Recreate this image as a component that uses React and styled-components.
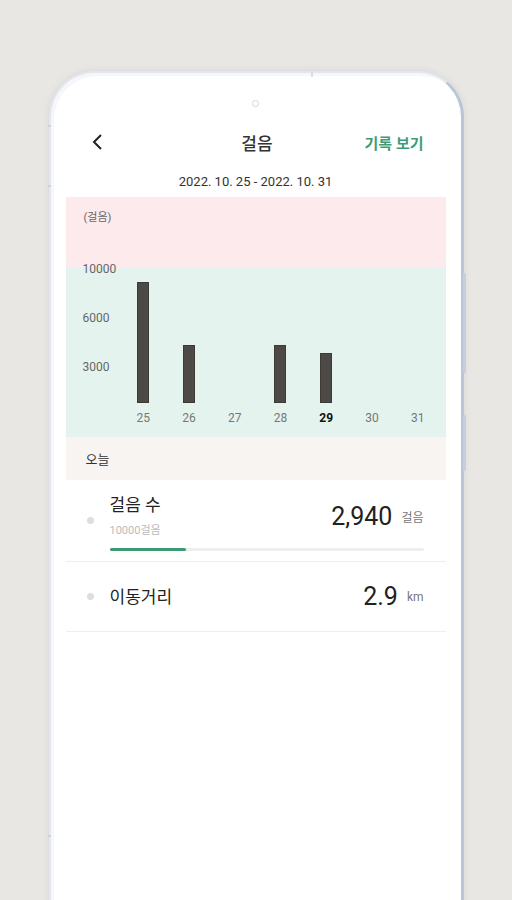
import React from "react";
import styled, { createGlobalStyle } from "styled-components";

const GlobalStyle = createGlobalStyle`
  html, body {
    margin: 0;
    height: 100%;
    overflow: hidden;
    background: #e9e7e3;
  }
  body {
    font-family: Roboto, "Noto Sans CJK KR", sans-serif;
    color: #333;
  }
`;

const Stage = styled.div`
  height: 900px;
  overflow: hidden;
  padding-top: 71px;
  box-sizing: border-box;
  display: flex;
  justify-content: center;
`;

const Phone = styled.div`
  position: relative;
  flex-shrink: 0;
  width: 415px;
  height: 880px;
  background: #fff;
  border: 2px solid #e3e7ee;
  border-right: 3px solid #b9c6d7;
  border-radius: 46px;
  box-shadow: inset 3px 3px 0 #f6f7fa, 0 0 6px rgba(150, 160, 175, 0.25);
  padding: 27px 15px 0 15px;
  box-sizing: border-box;
`;

const SideKey = styled.span`
  position: absolute;
  width: 3px;
  height: ${(p) => p.h}px;
  top: ${(p) => p.top}px;
  ${(p) => (p.left ? "left: -3px;" : "right: -5px;")}
  background: #c6d0dd;
  border-radius: 2px;
`;

const TopNotch = styled.span`
  position: absolute;
  top: -2px;
  left: 260px;
  width: 2px;
  height: 6px;
  background: #d7dde6;
`;

const Camera = styled.div`
  width: 7px;
  height: 7px;
  margin: 0 auto;
  border-radius: 50%;
  border: 1.5px solid #d4d6d8;
  box-sizing: border-box;
`;

const Header = styled.div`
  display: grid;
  grid-template-columns: 1fr auto 1fr;
  align-items: center;
  height: 40px;
  margin-top: 15px;
  padding: 0 22px 0 25px;
`;

const Back = styled.div`
  display: flex;
  align-items: center;
`;

const Title = styled.div`
  font-size: 17px;
  font-weight: 500;
  color: #333;
`;

const Action = styled.div`
  justify-self: end;
  font-size: 15px;
  font-weight: 600;
  color: #3f9b76;
`;

const DateRange = styled.div`
  margin-top: 11px;
  height: 18px;
  line-height: 18px;
  text-align: center;
  font-size: 13px;
  color: #333;
`;

const Chart = styled.div`
  margin-top: 6px;
  height: 240px;
  box-sizing: border-box;
  padding: 13px 5px 12px 18px;
  background: linear-gradient(#fdeaec 0 71px, #e5f3ee 71px 100%);
`;

const Unit = styled.div`
  font-size: 11px;
  line-height: 16px;
  color: #666;
`;

const Plot = styled.div`
  display: flex;
  height: 199px;
`;

const Axis = styled.div`
  width: 37px;
  display: flex;
  flex-direction: column;
  gap: 35px;
  padding-top: 36px;
`;

const Tick = styled.span`
  font-size: 12px;
  line-height: 14px;
  color: #666;
  margin-left: -1px;
`;

const Day = styled.div`
  width: 46px;
  display: flex;
  flex-direction: column;
  align-items: center;
  justify-content: flex-end;
`;

const Bar = styled.div`
  width: 12px;
  background: #4c4947;
  box-shadow: inset 0 0 0 1px #3c3937;
`;

const DayLabel = styled.span`
  margin-top: 8px;
  font-size: 12px;
  line-height: 14px;
  color: ${(p) => (p.today ? "#111" : "#777")};
  font-weight: ${(p) => (p.today ? 700 : 400)};
`;

const SectionHead = styled.div`
  height: 43px;
  display: flex;
  align-items: center;
  padding-left: 20px;
  background: #f7f4f2;
  font-size: 13px;
  color: #333;
`;

const Row = styled.div`
  display: flex;
  align-items: center;
  height: ${(p) => p.h}px;
  padding: 0 22px 0 21px;
  border-bottom: 1px solid #eeeeee;
  box-sizing: border-box;
`;

const Dot = styled.span`
  width: 7px;
  height: 7px;
  border-radius: 50%;
  background: #dedede;
  flex-shrink: 0;
`;

const Main = styled.div`
  flex: 1;
  margin-left: 16px;
  padding-top: ${(p) => p.pad || 0}px;
  display: flex;
  flex-direction: column;
`;

const Line = styled.div`
  display: flex;
  align-items: center;
  justify-content: space-between;
`;

const Label = styled.div`
  font-size: 17px;
  line-height: 20px;
  color: #222;
`;

const Sub = styled.div`
  margin-top: 9px;
  font-size: 11px;
  line-height: 14px;
  color: #bbb;
`;

const Value = styled.div`
  display: flex;
  align-items: center;
  gap: 9px;
`;

const Number = styled.span`
  font-size: 25px;
  color: #222;
`;

const Suffix = styled.span`
  font-size: 12px;
  color: #777;
`;

const Track = styled.div`
  margin-top: 10px;
  height: 3px;
  background: #eeeeee;
  border-radius: 2px;
`;

const Fill = styled.div`
  height: 100%;
  background: #3a9a72;
  border-radius: 2px;
`;

const days = [
  { d: 25, h: 121 },
  { d: 26, h: 58 },
  { d: 27, h: 0 },
  { d: 28, h: 58 },
  { d: 29, h: 50, today: true },
  { d: 30, h: 0 },
  { d: 31, h: 0 },
];

export default function App() {
  const progress = 24.4;
  return (
    <>
      <GlobalStyle />
      <Stage>
        <Phone>
          <TopNotch />
          <SideKey left top={52} h={2} />
          <SideKey left top={112} h={2} />
          <SideKey left top={762} h={2} />
          <SideKey top={200} h={100} />
          <SideKey top={342} h={56} />
          <Camera />
          <Header>
            <Back>
              <svg width="12" height="18" viewBox="0 0 12 18">
                <polyline
                  points="10,2 3,9 10,16"
                  fill="none"
                  stroke="#222"
                  strokeWidth="2"
                />
              </svg>
            </Back>
            <Title>걸음</Title>
            <Action>기록 보기</Action>
          </Header>
          <DateRange>2022. 10. 25 - 2022. 10. 31</DateRange>
          <Chart>
            <Unit>(걸음)</Unit>
            <Plot>
              <Axis>
                <Tick>10000</Tick>
                <Tick>6000</Tick>
                <Tick>3000</Tick>
              </Axis>
              {days.map((x) => (
                <Day key={x.d}>
                  {x.h > 0 && <Bar style={{ height: x.h }} />}
                  <DayLabel today={x.today}>{x.d}</DayLabel>
                </Day>
              ))}
            </Plot>
          </Chart>
          <SectionHead>오늘</SectionHead>
          <Row h={82}>
            <Dot />
            <Main pad={4}>
              <Line>
                <div>
                  <Label>걸음 수</Label>
                  <Sub>10000걸음</Sub>
                </div>
                <Value>
                  <Number>2,940</Number>
                  <Suffix>걸음</Suffix>
                </Value>
              </Line>
              <Track>
                <Fill style={{ width: `${progress}%` }} />
              </Track>
            </Main>
          </Row>
          <Row h={70}>
            <Dot />
            <Main>
              <Line>
                <Label>이동거리</Label>
                <Value>
                  <Number>2.9</Number>
                  <Suffix>km</Suffix>
                </Value>
              </Line>
            </Main>
          </Row>
        </Phone>
      </Stage>
    </>
  );
}
